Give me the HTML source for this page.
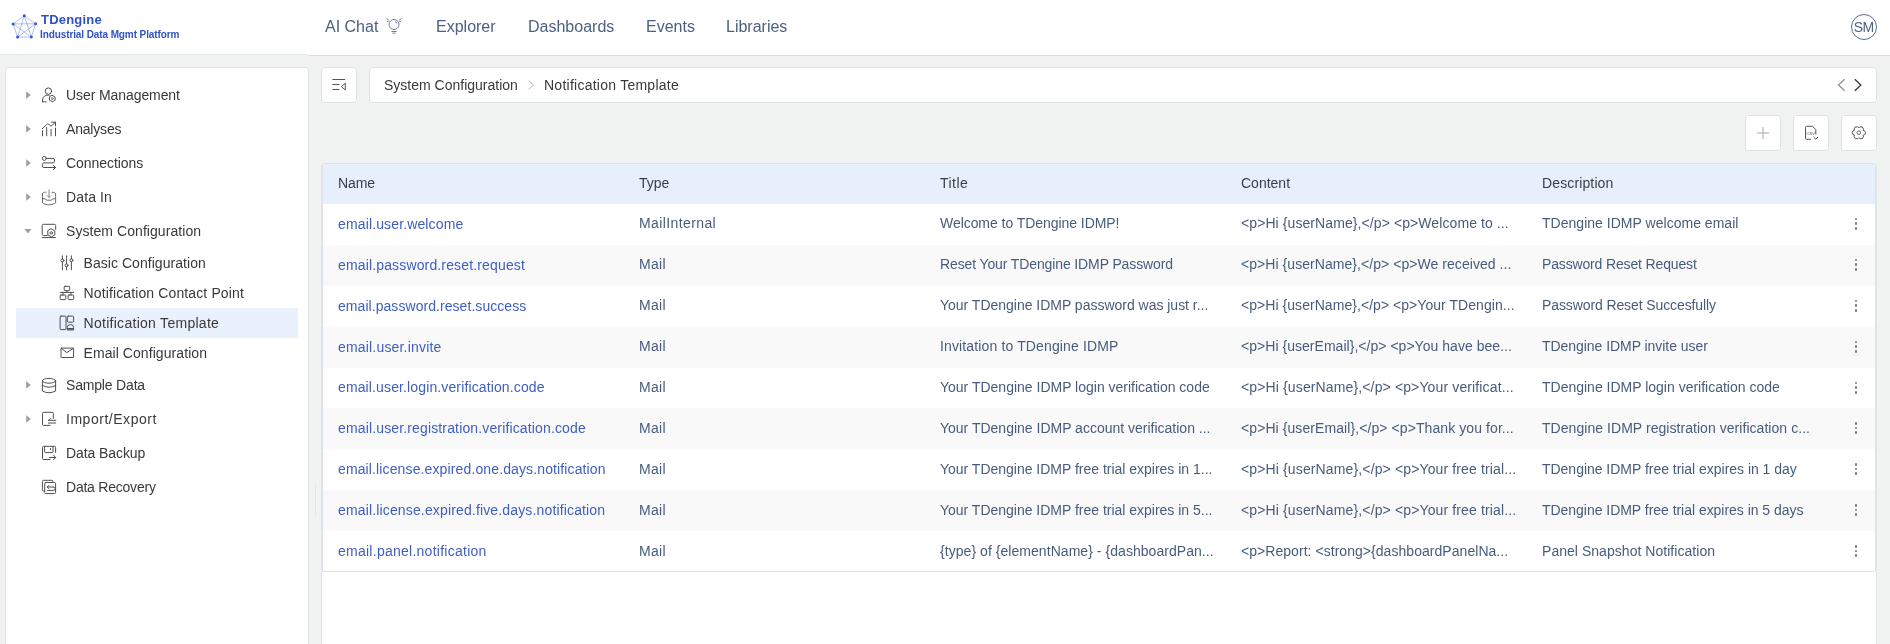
<!DOCTYPE html>
<html><head><meta charset="utf-8">
<style>
*{box-sizing:border-box;margin:0;padding:0}
html,body{width:1890px;height:644px;overflow:hidden}
body{background:#f1f3f3;font-family:"Liberation Sans",sans-serif;position:relative;color:#393939}
.abs{position:absolute}
#hdr{position:absolute;left:0;top:0;width:1890px;height:55px;background:#fff;border-bottom:1px solid #e6e7e9}
.logo-t1{position:absolute;left:41px;top:12px;font-size:13px;font-weight:bold;color:#2f52c8;line-height:15px;letter-spacing:0.2px}
.logo-t2{position:absolute;left:40px;top:29px;font-size:10px;font-weight:bold;color:#2f52c8;line-height:12px;letter-spacing:-0.1px}
.nav{position:absolute;top:17px;font-size:16px;line-height:19px;color:#4b6182;white-space:nowrap}
.avatar{position:absolute;left:1851px;top:14px;width:26px;height:26px;border:1px solid #5a6d8a;border-radius:50%;font-size:14px;color:#4b6182;text-align:center;line-height:24px;letter-spacing:-0.6px;text-indent:-0.5px}
#side{position:absolute;left:5px;top:67px;width:304px;height:600px;background:#fff;border:1px solid #e2e3e5;border-radius:3px}
.sel{position:absolute;left:16px;top:308px;width:282px;height:30px;background:#e9f1fd}
.sl{position:absolute;height:34px;font-size:14px;line-height:34px;color:#393939;white-space:nowrap}
.btn{position:absolute;background:#fff;border:1px solid #e0e1e4;border-radius:3px}
#crumb{position:absolute;left:369px;top:67px;width:1508px;height:36px;background:#fff;border:1px solid #e0e1e4;border-radius:4px}
.cr{position:absolute;top:68px;height:34px;line-height:34px;font-size:14px;color:#393939;white-space:nowrap}
#panel{position:absolute;left:321px;top:163px;width:1556px;height:500px;background:#fff;border:1px solid #e2e4e7;border-radius:3px}
.row{position:absolute;left:0;width:1552px;height:41px;font-size:14px;line-height:38px;color:#475c7d;white-space:nowrap;}
.row.st{background:#f9f9fa}
.row .c{position:absolute;top:0}
.row.lo .c{top:1px}
.row.lo .kebab{top:14.3px}
.row .c1{left:15px;color:#3d5ec5}
.row .c2{left:316px}
.row .c3{left:617px}
.row .c4{left:918px}
.row .c5{left:1219px}
.row.h{background:#e8effc;color:#393f47;height:40px;line-height:38px}
.row.h .c1{color:#393f47}
.kebab{position:absolute;left:1531.5px;top:13.8px;width:2.6px;height:13px}
.kebab i{display:block;width:2.6px;height:2.6px;border-radius:50%;background:#74777b;margin-bottom:2px}
#tbl{position:absolute;left:0;top:-1px;width:1554px;height:409px;border:1px solid #dce1ea;border-radius:3px 3px 0 0;overflow:hidden}
#ov{position:absolute;left:0;top:0;pointer-events:none}
#wrap{position:absolute;left:0;top:0;width:1890px;height:644px;will-change:transform}
</style></head><body>
<div id="wrap">
<div id="hdr">
  <div class="logo-t1">TDengine</div>
  <div class="logo-t2">Industrial Data Mgmt Platform</div>
  <div class="nav" style="left:325px">AI Chat</div>
  <div class="nav" style="left:436px">Explorer</div>
  <div class="nav" style="left:528px">Dashboards</div>
  <div class="nav" style="left:646px">Events</div>
  <div class="nav" style="left:726px">Libraries</div>
  <div class="avatar">SM</div>
</div>

<div class="abs" style="left:309px;top:54px;width:1581px;height:1px;background:#fff"></div><div class="abs" style="left:309px;top:55px;width:1581px;height:1px;background:#dcdee1"></div>
<div id="side"></div>
<div class="sel"></div>
<div class="sl" style="left:66px;top:78px;letter-spacing:-0.086px">User Management</div>
<div class="sl" style="left:66px;top:112px;letter-spacing:-0.19px">Analyses</div>
<div class="sl" style="left:66px;top:146px;letter-spacing:-0.06px">Connections</div>
<div class="sl" style="left:66px;top:180px;letter-spacing:0.12px">Data In</div>
<div class="sl" style="left:66px;top:214px;letter-spacing:0.063px">System Configuration</div>
<div class="sl" style="left:83.5px;top:246px;letter-spacing:0.05px">Basic Configuration</div>
<div class="sl" style="left:83.5px;top:276px;letter-spacing:0.124px">Notification Contact Point</div>
<div class="sl" style="left:83.5px;top:306px;letter-spacing:0.285px">Notification Template</div>
<div class="sl" style="left:83.5px;top:336px;letter-spacing:0.072px">Email Configuration</div>
<div class="sl" style="left:66px;top:368px;letter-spacing:-0.18px">Sample Data</div>
<div class="sl" style="left:66px;top:402px;letter-spacing:0.525px">Import/Export</div>
<div class="sl" style="left:66px;top:436px;letter-spacing:-0.08px">Data Backup</div>
<div class="sl" style="left:66px;top:470px;letter-spacing:-0.225px">Data Recovery</div>

<div class="btn" style="left:321px;top:67px;width:36px;height:36px;border-radius:4px"></div>
<div id="crumb"></div>
<div class="cr" style="left:384px">System Configuration</div>
<div class="cr" style="left:544px;letter-spacing:0.25px">Notification Template</div>

<div class="btn" style="left:1745px;top:115px;width:36px;height:36px"></div>
<div class="btn" style="left:1793px;top:115px;width:36px;height:36px"></div>
<div class="btn" style="left:1841px;top:115px;width:36px;height:36px"></div>

<div id="panel">
<div id="tbl">
<div class="row h" style="top:0;height:40px"><span class="c c1" style="letter-spacing:-0.067px">Name</span><span class="c c2" style="letter-spacing:-0.033px">Type</span><span class="c c3" style="letter-spacing:0.45px">Title</span><span class="c c4" style="letter-spacing:0.0px">Content</span><span class="c c5" style="letter-spacing:0.13px">Description</span></div>
<div class="row" style="top:40px;height:41px"><span class="c c1" style="letter-spacing:0.135px;top:1px">email.user.welcome</span><span class="c c2" style="letter-spacing:0.391px">MailInternal</span><span class="c c3" style="letter-spacing:-0.054px">Welcome to TDengine IDMP!</span><span class="c c4" style="letter-spacing:0.087px">&lt;p&gt;Hi {userName},&lt;/p&gt; &lt;p&gt;Welcome to ...</span><span class="c c5" style="letter-spacing:0.023px">TDengine IDMP welcome email</span><span class="kebab"><i></i><i></i><i></i></span></div>
<div class="row st" style="top:81px;height:41px"><span class="c c1" style="letter-spacing:0.148px;top:1px">email.password.reset.request</span><span class="c c2" style="letter-spacing:0.3px">Mail</span><span class="c c3" style="letter-spacing:-0.119px">Reset Your TDengine IDMP Password</span><span class="c c4" style="letter-spacing:0.054px">&lt;p&gt;Hi {userName},&lt;/p&gt; &lt;p&gt;We received ...</span><span class="c c5" style="letter-spacing:-0.152px">Password Reset Request</span><span class="kebab"><i></i><i></i><i></i></span></div>
<div class="row" style="top:122px;height:41px"><span class="c c1" style="letter-spacing:0.056px;top:1px">email.password.reset.success</span><span class="c c2" style="letter-spacing:0.3px">Mail</span><span class="c c3" style="letter-spacing:-0.015px">Your TDengine IDMP password was just r...</span><span class="c c4" style="letter-spacing:0.049px">&lt;p&gt;Hi {userName},&lt;/p&gt; &lt;p&gt;Your TDengin...</span><span class="c c5" style="letter-spacing:-0.104px">Password Reset Succesfully</span><span class="kebab"><i></i><i></i><i></i></span></div>
<div class="row st" style="top:163px;height:41px"><span class="c c1" style="letter-spacing:0.181px;top:1px">email.user.invite</span><span class="c c2" style="letter-spacing:0.3px">Mail</span><span class="c c3" style="letter-spacing:0.135px">Invitation to TDengine IDMP</span><span class="c c4" style="letter-spacing:0.032px">&lt;p&gt;Hi {userEmail},&lt;/p&gt; &lt;p&gt;You have bee...</span><span class="c c5" style="letter-spacing:-0.05px">TDengine IDMP invite user</span><span class="kebab"><i></i><i></i><i></i></span></div>
<div class="row" style="top:204px;height:40px"><span class="c c1" style="letter-spacing:0.127px">email.user.login.verification.code</span><span class="c c2" style="letter-spacing:0.3px">Mail</span><span class="c c3" style="letter-spacing:-0.002px">Your TDengine IDMP login verification code</span><span class="c c4" style="letter-spacing:0.132px">&lt;p&gt;Hi {userName},&lt;/p&gt; &lt;p&gt;Your verificat...</span><span class="c c5" style="letter-spacing:-0.003px">TDengine IDMP login verification code</span><span class="kebab"><i></i><i></i><i></i></span></div>
<div class="row st lo" style="top:244px;height:41px"><span class="c c1" style="letter-spacing:0.143px">email.user.registration.verification.code</span><span class="c c2" style="letter-spacing:0.3px">Mail</span><span class="c c3" style="letter-spacing:-0.002px">Your TDengine IDMP account verification ...</span><span class="c c4" style="letter-spacing:0.083px">&lt;p&gt;Hi {userEmail},&lt;/p&gt; &lt;p&gt;Thank you for...</span><span class="c c5" style="letter-spacing:0.049px">TDengine IDMP registration verification c...</span><span class="kebab"><i></i><i></i><i></i></span></div>
<div class="row lo" style="top:285px;height:41px"><span class="c c1" style="letter-spacing:0.126px">email.license.expired.one.days.notification</span><span class="c c2" style="letter-spacing:0.3px">Mail</span><span class="c c3" style="letter-spacing:-0.011px">Your TDengine IDMP free trial expires in 1...</span><span class="c c4" style="letter-spacing:0.133px">&lt;p&gt;Hi {userName},&lt;/p&gt; &lt;p&gt;Your free trial...</span><span class="c c5" style="letter-spacing:-0.025px">TDengine IDMP free trial expires in 1 day</span><span class="kebab"><i></i><i></i><i></i></span></div>
<div class="row st lo" style="top:326px;height:41px"><span class="c c1" style="letter-spacing:0.149px">email.license.expired.five.days.notification</span><span class="c c2" style="letter-spacing:0.3px">Mail</span><span class="c c3" style="letter-spacing:-0.011px">Your TDengine IDMP free trial expires in 5...</span><span class="c c4" style="letter-spacing:0.133px">&lt;p&gt;Hi {userName},&lt;/p&gt; &lt;p&gt;Your free trial...</span><span class="c c5" style="letter-spacing:-0.032px">TDengine IDMP free trial expires in 5 days</span><span class="kebab"><i></i><i></i><i></i></span></div>
<div class="row lo" style="top:367px;height:40px"><span class="c c1" style="letter-spacing:0.257px">email.panel.notification</span><span class="c c2" style="letter-spacing:0.3px">Mail</span><span class="c c3" style="letter-spacing:0.049px">{type} of {elementName} - {dashboardPan...</span><span class="c c4" style="letter-spacing:0.045px">&lt;p&gt;Report: &lt;strong&gt;{dashboardPanelNa...</span><span class="c c5" style="letter-spacing:0.038px">Panel Snapshot Notification</span><span class="kebab"><i></i><i></i><i></i></span></div>
</div>
</div>

<svg id="ov" width="1890" height="644" viewBox="0 0 1890 644">
  <!-- logo -->
  <g stroke="#6f88dc" stroke-width="0.55" fill="none">
    <path d="M24.3 15.8 L13.1 23.9 L17.6 37.1 L31.3 37.0 L35.6 23.8 Z"/>
    <path d="M24.3 15.8 L17.6 37.1 L35.6 23.8 L13.1 23.9 L31.3 37.0 Z"/>
  </g>
  <g fill="#3456cf">
    <circle cx="24.3" cy="15.8" r="1.5"/><circle cx="13.1" cy="23.9" r="1.5"/><circle cx="35.6" cy="23.8" r="1.5"/><circle cx="17.6" cy="37.1" r="1.5"/><circle cx="31.3" cy="37.0" r="1.5"/>
  </g>
  <!-- bulb -->
  <g fill="none" stroke="#6d7f99" stroke-width="1">
    <circle cx="394" cy="24.5" r="5"/>
    <path d="M391.5 31.5h5M392.5 33.2h3M386.5 18.5l2.2 1.6M401.5 18.5l-2.2 1.6M386.8 21.3h2M401.2 21.3h-2M395 21.5a3 3 0 0 1 2 2"/>
  </g>
  <!-- carets -->
  <g fill="#9aa0a8"><path d="M26.2 91.3 L30.9 95 L26.2 98.7 Z"/><path d="M26.2 125.3 L30.9 129 L26.2 132.7 Z"/><path d="M26.2 159.3 L30.9 163 L26.2 166.7 Z"/><path d="M26.2 193.3 L30.9 197 L26.2 200.7 Z"/><path d="M24.4 229 L31.5 229 L27.95 233.5 Z"/><path d="M26.2 381.3 L30.9 385 L26.2 388.7 Z"/><path d="M26.2 415.3 L30.9 419 L26.2 422.7 Z"/></g>
  <!-- sidebar icons -->
  <g fill="none" stroke="#4f4f4f" stroke-width="1" stroke-linecap="round" stroke-linejoin="round">
    <!-- user mgmt -->
    <circle cx="48.4" cy="91.1" r="3.2"/>
    <path d="M42.5 101.8 V100 a5 5 0 0 1 6.5 -4.8"/>
    <path d="M42.5 101.8 H46"/>
    <path d="M52.3 95.4 l2.8 1.6 v3.2 l-2.8 1.6 l-2.8 -1.6 v-3.2 z"/>
    <circle cx="52.3" cy="98.6" r="1" stroke="#777"/>
    <!-- analyses -->
    <path d="M42.5 130.7 V135.8 M46.7 127.5 V135.8 M51.1 129.3 V135.8 M55.5 128.1 V135.8"/>
    <path d="M42.3 128.7 L47.7 123.5 L51 126.2 L55.5 122.2 M51.5 122.2 H55.5 V125.9"/>
    <!-- connections -->
    <circle cx="44.3" cy="158.4" r="2"/>
    <path d="M46.3 158.4 H53 a1.5 1.5 0 0 1 1.5 1.5 V161.4 a1.5 1.5 0 0 1 -1.5 1.5 H43.9 a1.5 1.5 0 0 0 -1.5 1.5 V166 a1.5 1.5 0 0 0 1.5 1.5 H55.6 M53.3 165.3 L55.6 167.5 L53.3 169.7"/>
    <!-- data in -->
    <g stroke="#6a6a6a" stroke-dasharray="2.2 0.8"><path d="M42.5 193.5 V203 Q49 206.5 55.6 203 V193.5 M42.5 193.5 Q43.5 192.2 46 192.2 M52 192.2 Q54.6 192.2 55.6 193.5 M42.5 198.8 H45.5 L46.5 200.2 H51.5 L52.5 198.8 H55.6"/></g>
    <path d="M49 190 V197.5 M47.3 195.8 L49 197.5 L50.7 195.8" stroke="#8a8a8a"/>
    <!-- system config -->
    <path d="M47.3 235.6 H43.5 a1.3 1.3 0 0 1 -1.3 -1.3 V225.6 a1.3 1.3 0 0 1 1.3 -1.3 H54.4 a1.3 1.3 0 0 1 1.3 1.3 V229.5 M42.2 237.6 H55.4"/>
    <path d="M51.3 228.9 l3.5 2 v4 l-3.5 2 l-3.5 -2 v-4 z"/>
    <circle cx="51.3" cy="232.9" r="1.2"/>
    <!-- basic config -->
    <path d="M62.4 255.8 V258.9 M62.4 261.9 V269.8 M66.6 255.8 V263.8 M66.6 266.8 V269.8 M71.4 255.8 V258.8 M71.4 261.8 V269.8"/>
    <circle cx="62.4" cy="260.4" r="1.5"/><circle cx="66.6" cy="265.3" r="1.5"/><circle cx="71.4" cy="260.3" r="1.5"/>
    <!-- contact point -->
    <rect x="64.2" y="286.3" width="5.5" height="4.4" rx="0.8"/>
    <path d="M60.2 292.4 H73.7 M66.95 290.7 V292.4 M63 292.4 V295 M71 292.4 V295"/>
    <rect x="60.2" y="295" width="5.6" height="4.6" rx="0.8"/>
    <rect x="68.1" y="295" width="5.6" height="4.6" rx="0.8"/>
    <!-- template -->
    <rect x="60.1" y="316.1" width="5.9" height="13.5" rx="1"/>
    <rect x="67.3" y="316.1" width="6.3" height="6.1" rx="1"/>
    <path d="M67.3 329.6 V327.5 a3.15 3 0 0 1 6.3 0 V329.6 Z"/>
    <path d="M67.6 328.8 H73.3" stroke-width="1.4"/>
    <!-- email -->
    <rect x="61" y="348.1" width="12.6" height="9.4" rx="0.6"/>
    <path d="M61.2 348.3 L66.8 352.6 L73.4 348.3"/>
    <!-- sample data -->
    <ellipse cx="49" cy="380.8" rx="6.6" ry="2.4"/>
    <path d="M42.4 380.8 V391 Q49 394.5 55.6 391 V380.8 M42.4 385.5 Q49 389 55.6 385.5"/>
    <!-- import/export -->
    <path d="M53.3 418.5 V413.5 a1.2 1.2 0 0 0 -1.2 -1.2 H43.7 a1.2 1.2 0 0 0 -1.2 1.2 V424.2 a1.2 1.2 0 0 0 1.2 1.2 H50"/>
    <path d="M55.8 420.3 H48.5 M50.5 418.5 L48.5 420.3 M48.3 423 H55.7"/>
    <!-- data backup -->
    <path d="M55.6 452.5 V447.5 a1.2 1.2 0 0 0 -1.2 -1.2 H43.7 a1.2 1.2 0 0 0 -1.2 1.2 V458.3 a1.2 1.2 0 0 0 1.2 1.2 H50"/>
    <path d="M44.6 446.5 V451.6 a1 1 0 0 0 1 1 H52 a1 1 0 0 0 1 -1 V446.5 M50.5 448.5 V449.5"/>
    <path d="M49.5 457.5 H55.6 M53.6 455.3 L55.7 457.5 L53.6 459.7"/>
    <!-- data recovery -->
    <path d="M53 481.7 V481.5 a1.2 1.2 0 0 0 -1.2 -1.2 H43.6 a1.2 1.2 0 0 0 -1.2 1.2 V489.8 a1.2 1.2 0 0 0 1.2 1.2 H44.7"/>
    <rect x="44.7" y="482.5" width="10.9" height="11.1" rx="1.2"/>
    <path d="M53.5 487 H47.2 M48.8 485.4 L47.2 487 L48.8 488.6 M47.5 490.4 H53.5 a1.7 1.7 0 0 0 0 -3.4"/>
  </g>
  <!-- collapse icon -->
  <g fill="none" stroke="#555" stroke-width="1">
    <path d="M332.4 79.5 H345.2 M332.4 84.5 H339.5 M332.4 89.5 H339.5"/>
    <path d="M345.3 83.2 V90 L341.4 86.6 Z" stroke-linejoin="round"/>
  </g>
  <!-- breadcrumb separator -->
  <path d="M528.6 80.5 L533.4 85 L528.6 89.5" fill="none" stroke="#b8bcc2" stroke-width="1"/>
  <!-- prev/next -->
  <path d="M1844.6 79.3 L1838.5 85 L1844.6 90.8" fill="none" stroke="#8a8d91" stroke-width="1.2"/>
  <path d="M1854.8 79.3 L1860.9 85 L1854.8 90.8" fill="none" stroke="#333" stroke-width="1.2"/>
  <!-- plus -->
  <path d="M1763 127 V139 M1757 133 H1769" stroke="#a8a8a8" stroke-width="1"/>
  <!-- csv file -->
  <g fill="none" stroke="#555" stroke-width="1">
    <path d="M1811 139.3 H1806.5 a1 1 0 0 1 -1 -1 V127.3 a1 1 0 0 1 1 -1 H1812.5 L1815.8 129.6 V134.5"/>
    <path d="M1813.5 137 L1815.8 139.2 L1818 137"/>
  </g>
  <text x="1806.6" y="134.6" font-family="Liberation Sans" font-size="4" fill="#555">CSV</text>
  <!-- gear -->
  <path d="M1855.3 126.9 H1857.8 L1858.8 127.9 L1859.8 126.9 H1862.3 L1863.5 129.1 L1863.2 130.5 L1864.7 130.9 L1865.6 132.8 L1864.7 134.7 L1863.2 135.1 L1863.5 136.5 L1862.3 138.7 H1859.8 L1858.8 137.7 L1857.8 138.7 H1855.3 L1854.1 136.5 L1854.4 135.1 L1852.9 134.7 L1852.1 132.8 L1852.9 130.9 L1854.4 130.5 L1854.1 129.1 Z" fill="none" stroke="#555" stroke-width="1" stroke-linejoin="round"/>
  <circle cx="1858.8" cy="132.7" r="1.8" fill="none" stroke="#666" stroke-width="1"/>
  <!-- splitter handle -->
  <rect x="315" y="483" width="1" height="33" fill="#e4e6e8"/>
</svg>
</div>
</body></html>
